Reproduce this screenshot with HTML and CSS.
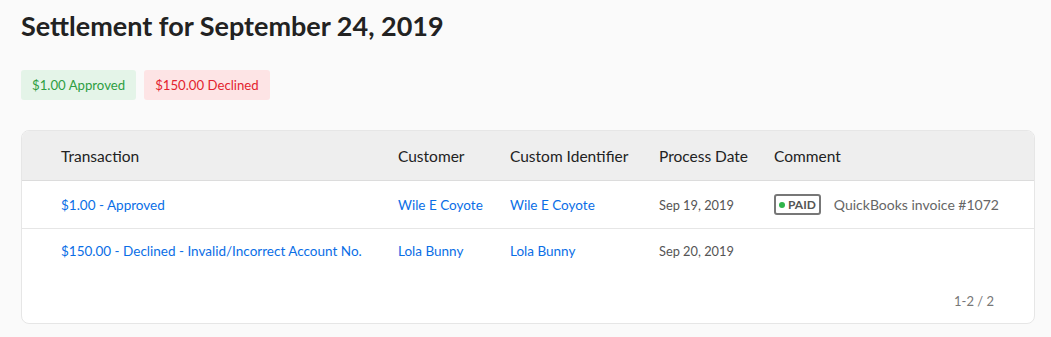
FILE: index.html
```html
<!DOCTYPE html>
<html lang="en">
<head>
  <meta charset="UTF-8" />
  <title>Settlement</title>
  <link rel="stylesheet" href="styles.css">
</head>
<body>
  <div class="page">
    <h1>Settlement for September 24, 2019</h1>

    <div class="totals">
      <span class="total approved">$1.00 Approved</span>
      <span class="total declined">$150.00 Declined</span>
    </div>

    <div class="card">
      <div class="row head">
        <div>Transaction</div>
        <div>Customer</div>
        <div>Custom Identifier</div>
        <div>Process Date</div>
        <div>Comment</div>
      </div>
      <div class="row">
        <a href="#">$1.00 - Approved</a>
        <a href="#">Wile E Coyote</a>
        <a href="#">Wile E Coyote</a>
        <div class="date">Sep 19, 2019</div>
        <div class="comment"><span class="paid"><i class="dot"></i>PAID</span>QuickBooks invoice #1072</div>
      </div>
      <div class="row last">
        <a href="#">$150.00 - Declined - Invalid/Incorrect Account No.</a>
        <a href="#">Lola Bunny</a>
        <a href="#">Lola Bunny</a>
        <div class="date">Sep 20, 2019</div>
        <div></div>
      </div>
      <div class="pager">1-2 / 2</div>
    </div>
  </div>
</body>
</html>
```

FILE: styles.css
```css
body {
  margin: 0;
  background: #fafafa;
  font-family: Lato, "Liberation Sans", sans-serif;
  color: #222;
}

.page {
  padding: 12px 16px 0 21px;
}

h1 {
  margin: 0;
  font-size: 27px;
  font-weight: 700;
  color: #222;
  line-height: 28px;
}

.totals {
  display: flex;
  gap: 8px;
  margin-top: 30px;
}

.total {
  display: inline-block;
  padding: 0 11px;
  height: 30px;
  line-height: 30px;
  font-size: 13.2px;
  border-radius: 3px;
}

.approved {
  background: #e4f4e8;
  color: #2e9e42;
}

.declined {
  background: #fde4e5;
  color: #e3232e;
}

.card {
  margin-top: 30px;
  background: #fff;
  border: 1px solid #e6e6e6;
  border-radius: 8px;
  overflow: hidden;
}

.row {
  display: grid;
  grid-template-columns: 337px 112px 149px 115px 1fr;
  align-items: center;
  padding-left: 39px;
  height: 47px;
  border-bottom: 1px solid #e6e6e6;
  font-size: 13.5px;
}

.row.head {
  background: #eeeeee;
  height: 49px;
  border-bottom-color: #dcdcdc;
  color: #222;
  font-size: 15.5px;
}

.row.last {
  border-bottom: none;
  height: 44px;
}

.row a {
  color: #0a6ee6;
  text-decoration: none;
}

.date {
  font-size: 12.8px;
  color: #555;
}

.comment {
  display: flex;
  align-items: center;
  font-size: 14px;
  color: #666;
}

.paid {
  display: inline-flex;
  align-items: center;
  gap: 3px;
  border: 2px solid #777;
  border-radius: 3px;
  padding: 0 3px 0 3px;
  height: 17px;
  font-size: 12px;
  font-weight: 700;
  color: #555;
  margin-right: 13px;
}

.dot {
  width: 6px;
  height: 6px;
  border-radius: 50%;
  background: #2fb44a;
}

.pager {
  text-align: right;
  padding: 20px 40px 14px 0;
  font-size: 13px;
  color: #777;
}
```
